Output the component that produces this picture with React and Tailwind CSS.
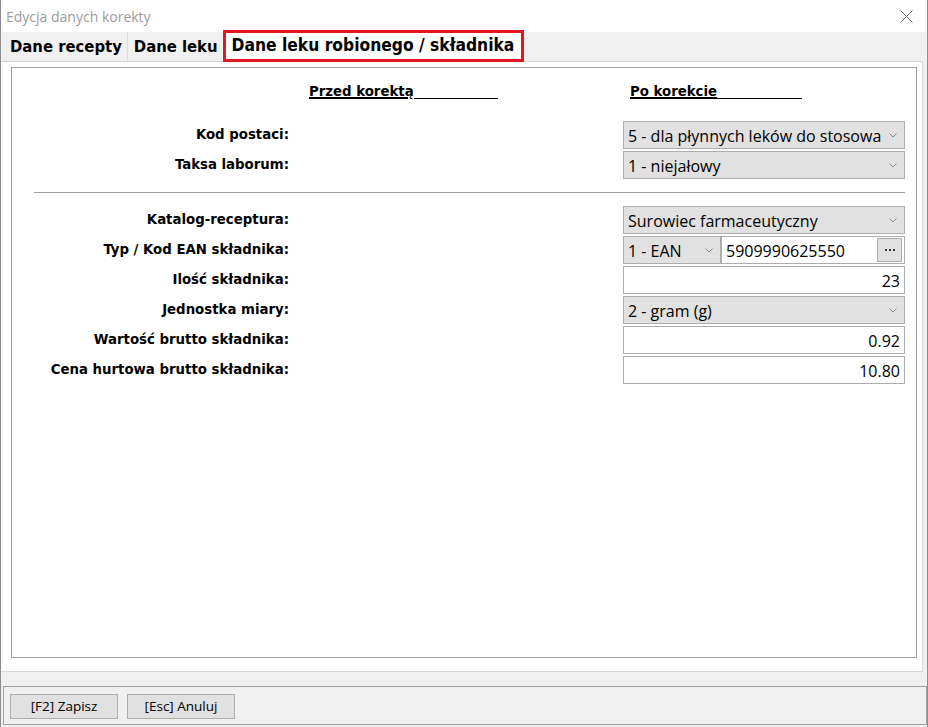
import React from "react";

const LBL = "font-['DejaVu_Sans_Condensed','Liberation_Sans',sans-serif] font-bold text-[14.8px] text-black";
const UI = "font-['Open_Sans','Noto_Sans',sans-serif]";

function Chevron() {
  return (
    <svg width="8" height="5" viewBox="0 0 8 5" className="shrink-0">
      <polyline points="0.5,0.5 4,4 7.5,0.5" fill="none" stroke="#8a8a8a" strokeWidth="1" />
    </svg>
  );
}

function Combo({ text, className = "" }) {
  return (
    <div className={`h-[28px] bg-[#e1e1e1] border border-[#adadad] flex items-center justify-between pl-[4px] pr-[7px] ${UI} text-[16px] text-black whitespace-nowrap overflow-hidden ${className}`}>
      <span className="pt-[2px]">{text}</span>
      <Chevron />
    </div>
  );
}

function Field({ text }) {
  return (
    <div className={`h-[28px] bg-white border border-[#adadad] flex items-center justify-end pr-[4px] pt-[2px] ${UI} text-[16px] text-black`}>
      {text}
    </div>
  );
}

function Row({ label, children }) {
  return (
    <div className="flex h-[28px] mb-[2px]">
      <div className={`w-[277px] text-right pt-[3px] leading-[20px] ${LBL}`}>{label}</div>
      <div className="ml-[334px] w-[282px]">{children}</div>
    </div>
  );
}

function Header({ text, lineW, className = "" }) {
  return (
    <div className={`whitespace-nowrap leading-[20px] ${LBL} ${className}`}>
      <span className="underline decoration-[1.5px]">{text}</span>
      <span className="inline-block border-b-[1.5px] border-black align-[-3px]" style={{ width: lineW }} />
    </div>
  );
}

export default function App() {
  return (
    <div className="w-[928px] h-[727px] bg-[#f0f0f0] flex flex-col border-l border-r border-[#8c8c8c] overflow-hidden">
      {/* Title bar */}
      <div className="h-[32px] bg-white flex items-center justify-between pl-[5px] pr-[14px] shrink-0">
        <span className={`${UI} text-[14px] text-[#9b9b9b]`}>Edycja danych korekty</span>
        <svg width="13" height="13" viewBox="0 0 13 13">
          <path d="M0.5 0.5 L12.5 12.5 M12.5 0.5 L0.5 12.5" stroke="#6b6b6b" strokeWidth="1" fill="none" />
        </svg>
      </div>

      {/* Tab strip */}
      <div className="h-[30px] shrink-0 flex items-stretch border-b border-[#d5d5d5] pl-[2px] mr-[4px]">
        <div className={`flex items-center pl-[7px] pr-[5px] pt-[2px] border-r border-[#dcdcdc] ${LBL} text-[16.5px]`}>Dane recepty</div>
        <div className={`flex items-center pl-[6px] pr-[5px] pt-[2px] ${LBL} text-[16.5px]`}>Dane leku</div>
        <div className={`relative z-10 -mt-[2px] -mb-[1px] h-[32px] bg-white border-[3px] border-[#e2171f] flex items-center pl-[6px] pr-[7px] ${LBL} text-[17.3px]`}>
          Dane leku robionego / składnika
        </div>
      </div>

      {/* Tab page */}
      <div className="h-[610px] shrink-0 bg-white border-b border-r border-[#d9d9d9] mr-[4px] pt-[5px]">
        <div className="ml-[10px] w-[906px] h-[591px] border border-[#a0a0a0]">
          {/* headers */}
          <div className="flex mt-[13px] h-[20px]">
            <Header text="Przed korektą" lineW={84} className="ml-[297px] w-[189px]" />
            <Header text="Po korekcie" lineW={85} className="ml-[132px] w-[172px]" />
          </div>

          <div className="mt-[20px]">
            <Row label="Kod postaci:">
              <Combo text="5 - dla płynnych leków do stosowa" />
            </Row>
            <Row label="Taksa laborum:">
              <Combo text="1 - niejałowy" />
            </Row>
          </div>

          <div className="ml-[22px] w-[871px] mt-[13px] border-t border-[#a0a0a0]" />

          <div className="mt-[13px]">
            <Row label="Katalog-receptura:">
              <Combo text="Surowiec farmaceutyczny" />
            </Row>
            <Row label="Typ / Kod EAN składnika:">
              <div className="flex h-[28px]">
                <Combo text="1 - EAN" className="w-[98px]" />
                <div className={`flex-1 h-[28px] bg-white border border-[#adadad] flex items-center justify-between pl-[4px] pr-[2px] ${UI} text-[16px] text-black`}>
                  <span className="pt-[2px]">5909990625550</span>
                  <div className="w-[25px] h-[24px] bg-[#e1e1e1] border border-[#adadad] flex items-center justify-center gap-[2px]">
                    <span className="w-[2px] h-[2px] bg-[#333]" />
                    <span className="w-[2px] h-[2px] bg-[#333]" />
                    <span className="w-[2px] h-[2px] bg-[#333]" />
                  </div>
                </div>
              </div>
            </Row>
            <Row label="Ilość składnika:">
              <Field text="23" />
            </Row>
            <Row label="Jednostka miary:">
              <Combo text="2 - gram (g)" />
            </Row>
            <Row label="Wartość brutto składnika:">
              <Field text="0.92" />
            </Row>
            <Row label="Cena hurtowa brutto składnika:">
              <Field text="10.80" />
            </Row>
          </div>
        </div>
      </div>

      {/* gap */}
      <div className="h-[14px] shrink-0" />

      {/* Footer */}
      <div className="h-[39px] shrink-0 ml-[2px] border border-[#a0a0a0] flex items-start pt-[7px] pl-[6px] gap-[9px]">
        <div className={`w-[108px] h-[25px] bg-[#e1e1e1] border border-[#adadad] flex items-center justify-center ${UI} text-[13.5px] text-black`}>[F2] Zapisz</div>
        <div className={`w-[108px] h-[25px] bg-[#e1e1e1] border border-[#adadad] flex items-center justify-center ${UI} text-[13.5px] text-black`}>[Esc] Anuluj</div>
      </div>
    </div>
  );
}
